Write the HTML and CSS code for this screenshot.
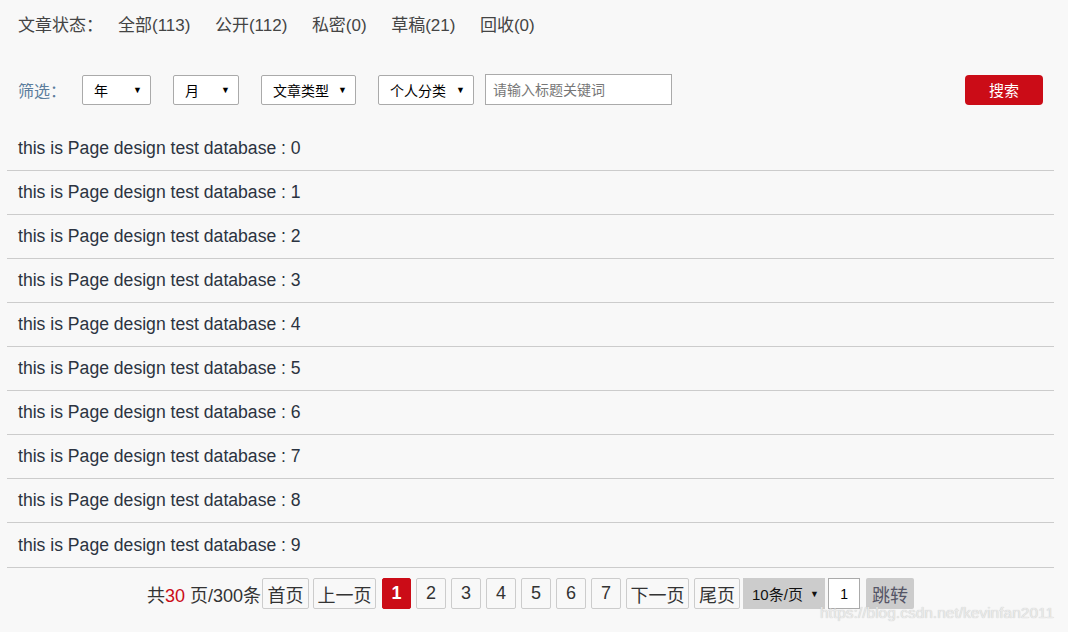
FILE: index.html
```html
<!DOCTYPE html>
<html lang="en">
<head>
    <meta charset="UTF-8">
    <title>文章管理</title>
    <link rel="stylesheet" href="styles.css">
</head>
<body>
<div class="page">
    <div class="status">
        <span class="label">文章状态：</span>
        <a href="#">全部(113)</a>
        <a href="#">公开(112)</a>
        <a href="#">私密(0)</a>
        <a href="#">草稿(21)</a>
        <a href="#">回收(0)</a>
    </div>

    <div class="filter">
        <span class="label">筛选：</span>
        <div class="sel w-year">年<span class="arrow">▼</span></div>
        <div class="sel w-month">月<span class="arrow">▼</span></div>
        <div class="sel w-type">文章类型<span class="arrow">▼</span></div>
        <div class="sel w-cat">个人分类<span class="arrow">▼</span></div>
        <input class="keyword" type="text" placeholder="请输入标题关键词">
        <button class="search">搜索</button>
    </div>

    <ul class="list">
        <li>this is Page design test database : 0</li>
        <li>this is Page design test database : 1</li>
        <li>this is Page design test database : 2</li>
        <li>this is Page design test database : 3</li>
        <li>this is Page design test database : 4</li>
        <li>this is Page design test database : 5</li>
        <li>this is Page design test database : 6</li>
        <li>this is Page design test database : 7</li>
        <li>this is Page design test database : 8</li>
        <li class="last">this is Page design test database : 9</li>
    </ul>

    <div class="pager">
        <span class="total">共<em>30</em> 页/300条</span>
        <a class="pbtn w-first" href="#">首页</a>
        <a class="pbtn w-prev" href="#">上一页</a>
        <a class="pbtn num active" href="#">1</a>
        <a class="pbtn num" href="#">2</a>
        <a class="pbtn num" href="#">3</a>
        <a class="pbtn num" href="#">4</a>
        <a class="pbtn num" href="#">5</a>
        <a class="pbtn num" href="#">6</a>
        <a class="pbtn num" href="#">7</a>
        <a class="pbtn w-prev" href="#">下一页</a>
        <a class="pbtn w-last" href="#">尾页</a>
        <div class="size">10条/页<span class="arrow">▼</span></div>
        <input class="jump" type="text" value="1">
        <button class="go">跳转</button>
    </div>
</div>
<div class="watermark">https://blog.csdn.net/kevinfan2011</div>
</body>
</html>
```

FILE: styles.css
```css
body {
    margin: 0;
    background-color: #f8f8f8;
    font-family: "Liberation Sans", Arial, "Noto Sans CJK SC", sans-serif;
    color: #333;
}

.page {
    padding: 0 14px 0 7px;
}

/* status row */
.status {
    display: flex;
    align-items: center;
    height: 47px;
    padding-left: 11px;
    font-size: 17px;
    color: #444;
}
.status .label {
    margin-right: 15px;
}
.status a {
    color: #444;
    text-decoration: none;
    margin-right: 24.5px;
}

/* filter row */
.filter {
    display: flex;
    align-items: center;
    height: 31px;
    margin-top: 27px;
    padding-left: 11px;
    font-size: 14px;
}
.filter .label {
    color: #5b7d9c;
    font-size: 16px;
    margin-right: 16px;
}
.sel {
    display: flex;
    align-items: center;
    justify-content: space-between;
    box-sizing: border-box;
    height: 30px;
    padding: 0 8px 0 11px;
    margin-right: 22px;
    background: #fff;
    border: 1px solid #aaa;
    border-radius: 2px;
    color: #000;
}
.sel .arrow, .size .arrow {
    font-size: 9px;
}
.w-year { width: 69px; }
.w-month { width: 66px; }
.w-type { width: 95px; }
.w-cat { width: 96px; margin-right: 11px; }

.keyword {
    box-sizing: border-box;
    width: 187px;
    height: 31px;
    padding: 0 7px;
    border: 1px solid #aaa;
    font-size: 14px;
    font-family: inherit;
    background: #fff;
}
.keyword::placeholder {
    color: #777;
}
.search {
    margin-left: auto;
    width: 78px;
    height: 30px;
    margin-right: 11px;
    border: none;
    border-radius: 4px;
    background-color: #cb0c17;
    color: #fff;
    font-size: 15px;
    font-family: inherit;
}

/* list */
.list {
    list-style: none;
    margin: 22px 0 0;
    padding: 0;
}
.list li {
    height: 43px;
    line-height: 43px;
    padding-left: 11px;
    border-bottom: 1px solid #ccc;
    font-size: 17.6px;
    color: #2b3340;
}
.list li.last {
    height: 44px;
    line-height: 44px;
}

/* pagination */
.pager {
    display: flex;
    align-items: center;
    justify-content: center;
    margin-top: 10px;
    font-size: 18px;
}
.pager .total {
    color: #333;
    margin-right: 1px;
}
.pager .total em {
    font-style: normal;
    color: #cb0c17;
}
.pbtn {
    display: flex;
    align-items: center;
    justify-content: center;
    box-sizing: border-box;
    height: 31px;
    padding: 0;
    margin-right: 5px;
    border: 1px solid #ccc;
    border-radius: 2px;
    color: #333;
    text-decoration: none;
}
.w-first { width: 47px; margin-right: 4px; }
.w-prev { width: 63px; margin-right: 5px; }
.w-last { width: 46px; margin-right: 3px; }
.pbtn.num {
    width: 30px;
}
.pbtn.active {
    width: 29px;
    margin-left: 1px;
    background-color: #cb0c17;
    border-color: #cb0c17;
    color: #fff;
    font-weight: bold;
}
.size {
    display: flex;
    align-items: center;
    justify-content: space-between;
    box-sizing: border-box;
    width: 82px;
    height: 31px;
    padding: 0 6px 0 9px;
    background-color: #ccc;
    font-size: 15px;
    color: #111;
}
.jump {
    box-sizing: border-box;
    width: 32px;
    height: 31px;
    margin-left: 3px;
    border: 1px solid #aaa;
    text-align: center;
    font-size: 14px;
    font-family: inherit;
    background: #fff;
    color: #000;
}
.go {
    height: 31px;
    width: 48px;
    margin-left: 6px;
    padding: 0;
    border: none;
    border-radius: 2px;
    background-color: #ccc;
    color: #556;
    font-size: 18px;
    font-family: inherit;
}

.watermark {
    position: absolute;
    left: 820px;
    top: 604px;
    font-size: 15.5px;
    color: #eaeaea;
    text-shadow: 0 0 1px #bbb;
}
```
